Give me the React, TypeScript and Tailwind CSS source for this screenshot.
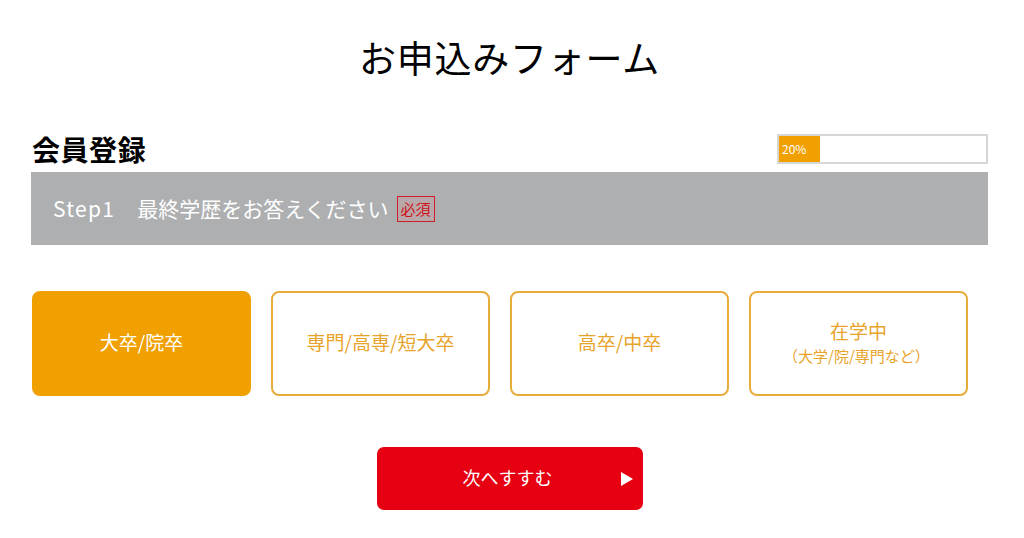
import { useState } from 'react';

const options = [
  { id: 'univ', label: '大卒/院卒' },
  { id: 'college', label: '専門/高専/短大卒' },
  { id: 'high', label: '高卒/中卒' },
  { id: 'student', label: '在学中', sub: '（大学/院/専門など）' },
];

function App() {
  const [selected, setSelected] = useState('univ');
  const progress = 20;

  return (
    <div
      className="min-h-[538px] bg-white text-black"
      style={{ fontFamily: '"Noto Sans CJK JP", "Noto Sans", sans-serif' }}
    >
      <div className="w-[957px] ml-[31px] pt-[29px]">
        <h1 className="text-center text-[37px] leading-[56px] font-normal tracking-[0.02em]">お申込みフォーム</h1>

        {/* header row */}
        <div className="mt-[49px] flex items-center justify-between h-[30px]">
          <h2 className="text-[28px] font-bold leading-none pl-px tracking-[0.02em]">会員登録</h2>
          <div className="w-[211px] h-[30px] border-2 border-[#d6d6d6] bg-white">
            <div className="h-full bg-[#f0a000] flex items-center pl-[3px]" style={{ width: `${progress}%` }}>
              <span className="text-white text-[12px] leading-none">{progress}%</span>
            </div>
          </div>
        </div>

        {/* step bar */}
        <div className="mt-[8px] h-[73px] bg-[#aeafb1] flex items-center pl-[22px] text-white text-[21px]">
          <span className="tracking-[0.06em]">Step1</span>
          <span className="ml-[22px]">最終学歴をお答えください</span>
          <span className="ml-[8px] mt-[1px] border border-[#cc1f2a] bg-[#b9a8aa] text-[#d0121b] text-[15px] leading-[24px] px-[3px]">必須</span>
        </div>

        {/* options */}
        <div className="mt-[46px] flex gap-[20px] pl-px">
          {options.map(opt => {
            const active = selected === opt.id;
            return (
              <button
                key={opt.id}
                onClick={() => setSelected(opt.id)}
                className={
                  active
                    ? 'w-[219px] h-[105px] rounded-[8px] border-[2.5px] border-[#f0a000] bg-[#f0a000] text-white flex flex-col items-center justify-center'
                    : 'w-[219px] h-[105px] rounded-[8px] border-[2.5px] border-[#e8ac3c] bg-white text-[#e8a32a] flex flex-col items-center justify-center'
                }
              >
                <span className="text-[19px] leading-[27px] -mt-[4px]">{opt.label}</span>
                {opt.sub && <span className="text-[15px] leading-[23px] -ml-[4px]">{opt.sub}</span>}
              </button>
            );
          })}
        </div>

        {/* next button */}
        <div className="mt-[51px] flex justify-center">
          <button className="relative w-[266px] h-[63px] rounded-[7px] bg-[#e60012] text-white text-[18px] flex items-center justify-center">
            <span className="-ml-[4px] -mt-[2px]">次へすすむ</span>
            <svg className="absolute right-[10px] top-1/2 -translate-y-1/2" width="12" height="14" viewBox="0 0 12 14">
              <polygon points="0,0 12,7 0,14" fill="#ffffff" />
            </svg>
          </button>
        </div>
      </div>
    </div>
  );
}

export default App;
